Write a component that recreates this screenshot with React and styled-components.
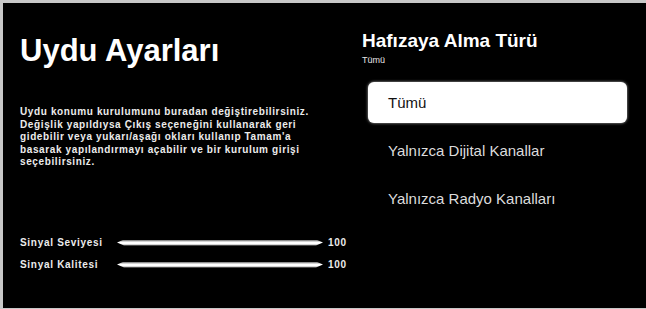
import React from 'react'
import styled, { createGlobalStyle } from 'styled-components'

const GlobalStyle = createGlobalStyle`
  html, body {
    margin: 0;
    background: #000;
    font-family: "Liberation Sans", Arial, sans-serif;
  }
`

const Screen = styled.div`
  width: 100%;
  height: 309px;
  box-sizing: border-box;
  border-style: solid;
  border-color: #c8c8c8;
  border-width: 3px 0 1px 3px;
  background: #000;
  display: flex;
  color: #f2f2f2;
`

const LeftPane = styled.div`
  width: 337px;
  box-sizing: border-box;
  padding-left: 17px;
  display: flex;
  flex-direction: column;
`

const Title = styled.h1`
  margin: 32px 0 0;
  font-size: 31px;
  line-height: 31px;
  font-weight: bold;
  color: #fff;
`

const Description = styled.p`
  margin: 40px 0 0;
  font-size: 10px;
  line-height: 12.5px;
  font-weight: bold;
  letter-spacing: 0.62px;
  color: #ececec;
  white-space: nowrap;
`

const Signals = styled.div`
  margin-top: 63px;
  display: flex;
  flex-direction: column;
`

const SignalRow = styled.div`
  height: 22px;
  display: flex;
  align-items: center;
  font-size: 10px;
  line-height: 22px;
  font-weight: bold;
  letter-spacing: 0.7px;
  color: #ececec;
`

const SignalLabel = styled.span`
  width: 97px;
  flex: none;
`

const Bar = styled.div`
  width: 206px;
  height: 6px;
  flex: none;
  background: linear-gradient(to bottom, #6a6a6a, #fff 35%, #fff 65%, #6a6a6a);
  clip-path: polygon(0 50%, 7px 0, calc(100% - 7px) 0, 100% 50%, calc(100% - 7px) 100%, 7px 100%);
`

const SignalValue = styled.span`
  margin-left: 5px;
`

const RightPane = styled.div`
  flex: 1;
  padding-left: 22px;
  display: flex;
  flex-direction: column;
`

const Heading = styled.h2`
  margin: 28px 0 0;
  font-size: 19px;
  line-height: 19px;
  font-weight: bold;
  color: #fff;
`

const Current = styled.div`
  margin-top: 6px;
  font-size: 9px;
  line-height: 9px;
  color: #e6e6e6;
`

const Options = styled.div`
  margin: 17px 0 0 6px;
  width: 259px;
  display: flex;
  flex-direction: column;
  gap: 7px;
`

const Option = styled.div`
  height: 41px;
  box-sizing: border-box;
  padding-left: 20px;
  border-radius: 6px;
  font-size: 15px;
  line-height: 41px;
  color: ${(p) => (p.$selected ? '#111' : '#dcdcdc')};
  background: ${(p) => (p.$selected ? '#fff' : 'transparent')};
  box-shadow: ${(p) => (p.$selected ? '0 0 3px rgba(255, 255, 255, 0.7)' : 'none')};
`

const signals = [
  { label: 'Sinyal Seviyesi', value: 100 },
  { label: 'Sinyal Kalitesi', value: 100 },
]

const options = ['Tümü', 'Yalnızca Dijital Kanallar', 'Yalnızca Radyo Kanalları']

const App = () => {
  const selected = 0
  return (
    <>
      <GlobalStyle />
      <Screen>
        <LeftPane>
          <Title>Uydu Ayarları</Title>
          <Description>
            Uydu konumu kurulumunu buradan değiştirebilirsiniz.<br />
            Değişlik yapıldıysa Çıkış seçeneğini kullanarak geri<br />
            gidebilir veya yukarı/aşağı okları kullanıp Tamam'a<br />
            basarak yapılandırmayı açabilir ve bir kurulum girişi<br />
            seçebilirsiniz.
          </Description>
          <Signals>
            {signals.map((s) => (
              <SignalRow key={s.label}>
                <SignalLabel>{s.label}</SignalLabel>
                <Bar />
                <SignalValue>{s.value}</SignalValue>
              </SignalRow>
            ))}
          </Signals>
        </LeftPane>
        <RightPane>
          <Heading>Hafızaya Alma Türü</Heading>
          <Current>{options[selected]}</Current>
          <Options>
            {options.map((o, i) => (
              <Option key={o} $selected={i === selected}>
                {o}
              </Option>
            ))}
          </Options>
        </RightPane>
      </Screen>
    </>
  )
}

export default App
